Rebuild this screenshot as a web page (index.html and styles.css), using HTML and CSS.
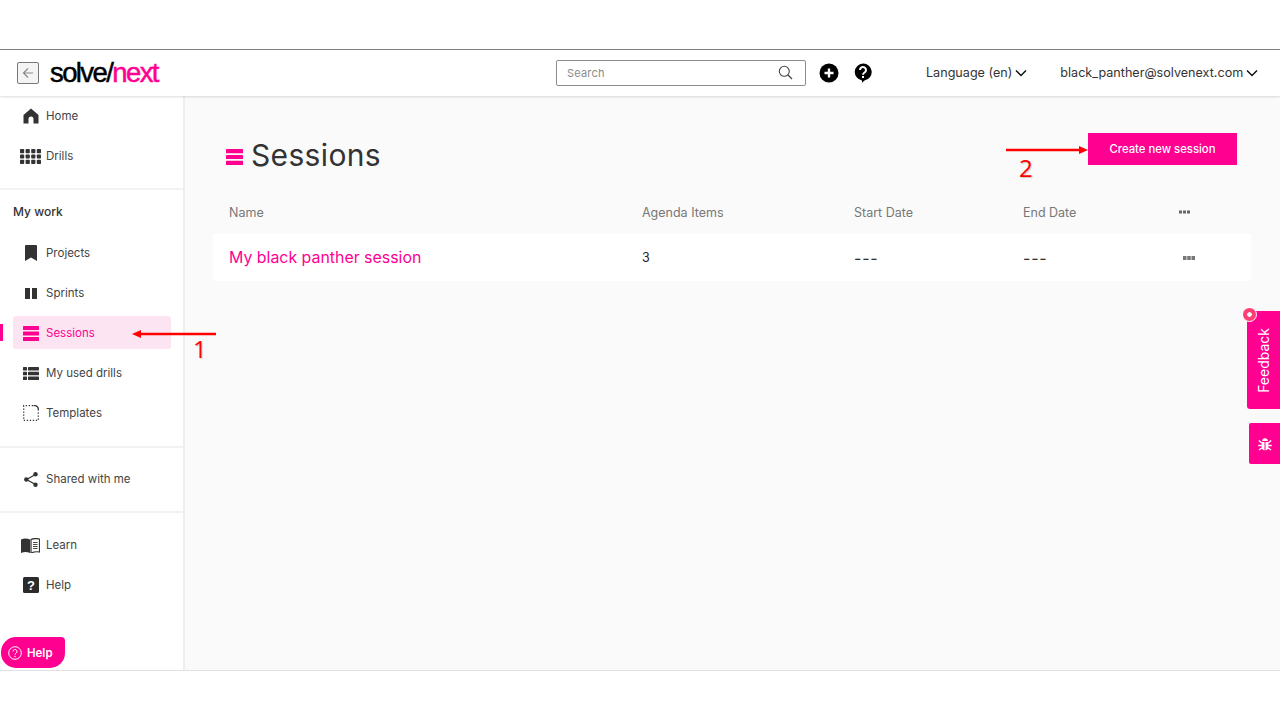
FILE: index.html
```html
<!DOCTYPE html>
<html lang="en">
<head>
<meta charset="utf-8">
<title>Sessions</title>
<link rel="stylesheet" href="styles.css">
</head>
<body>
<div class="app">
  <header class="topbar">
    <div class="brand">
      <button class="back" aria-label="Back">
        <svg width="14" height="14" viewBox="0 0 14 14"><path d="M12 7H2.500M7 2.500 2.500 7 7 11.500" fill="none" stroke="#8a8a8a" stroke-width="1.200"/></svg>
      </button>
      <span class="logo">solve/<span class="logo-next">next</span></span>
    </div>
    <div class="search">
      <span class="search-text">Search</span>
      <svg width="15" height="15" viewBox="0 0 15 15"><circle cx="6.300" cy="6.300" r="5" fill="none" stroke="#444" stroke-width="1.100"/><path d="M10 10l4 4" stroke="#444" stroke-width="1.200"/></svg>
    </div>
    <svg class="tool-plus" width="20" height="20" viewBox="0 0 20 20"><circle cx="10" cy="10" r="9.500" fill="#000"/><path d="M10 5.500v9M5.500 10h9" stroke="#fff" stroke-width="2.400"/></svg>
    <svg class="tool-help" width="18" height="20" viewBox="0 0 18 20"><path d="M9 .5a8.500 8.500 0 0 1 1.500 16.900L8 19.800v-2.400A8.500 8.500 0 0 1 9 .5Z" fill="#000"/><path d="M6 7a3 3 0 1 1 4.600 2.500C9.600 10.200 9 10.600 9 11.800" fill="none" stroke="#fff" stroke-width="2"/><rect x="8" y="13" width="2" height="2" fill="#fff"/></svg>
    <span class="menu menu-lang">Language (en)<svg width="12" height="8" viewBox="0 0 12 8"><path d="M1 1.500 6 6.500 11 1.500" fill="none" stroke="#111" stroke-width="1.500"/></svg></span>
    <span class="menu menu-user">black_panther@solvenext.com<svg width="12" height="8" viewBox="0 0 12 8"><path d="M1 1.500 6 6.500 11 1.500" fill="none" stroke="#111" stroke-width="1.500"/></svg></span>
  </header>
  <div class="body">
    <aside class="sidebar">
      <nav class="group group-first">
        <a class="item"><span class="ico"><svg width="16" height="16" viewBox="0 0 16 16"><path d="M8 .5 15.500 7v8.500H10.500V11a2.500 2.500 0 0 0-5 0v4.500H.5V7Z" fill="#333"/></svg></span>Home</a>
        <a class="item"><span class="ico"><svg width="21" height="15" viewBox="0 0 21 15"><g fill="#333"><rect x="0" y="0" width="4.200" height="4.200" rx=".8"/><rect x="5.600" y="0" width="4.200" height="4.200" rx=".8"/><rect x="11.200" y="0" width="4.200" height="4.200" rx=".8"/><rect x="16.800" y="0" width="4.200" height="4.200" rx=".8"/><rect x="0" y="5.400" width="4.200" height="4.200" rx=".8"/><rect x="5.600" y="5.400" width="4.200" height="4.200" rx=".8"/><rect x="11.200" y="5.400" width="4.200" height="4.200" rx=".8"/><rect x="16.800" y="5.400" width="4.200" height="4.200" rx=".8"/><rect x="0" y="10.800" width="4.200" height="4.200" rx=".8"/><rect x="5.600" y="10.800" width="4.200" height="4.200" rx=".8"/><rect x="11.200" y="10.800" width="4.200" height="4.200" rx=".8"/><rect x="16.800" y="10.800" width="4.200" height="4.200" rx=".8"/></g></svg></span>Drills</a>
      </nav>
      <nav class="group group-work">
        <div class="group-title">My work</div>
        <a class="item"><span class="ico"><svg width="12" height="16" viewBox="0 0 12 16"><path d="M0 1a1 1 0 0 1 1-1h10a1 1 0 0 1 1 1v15l-6-3.500L0 16Z" fill="#333"/></svg></span>Projects</a>
        <a class="item"><span class="ico"><svg width="12" height="11" viewBox="0 0 12 11"><rect width="5" height="11" fill="#333"/><rect x="7" width="5" height="11" fill="#333"/></svg></span>Sprints</a>
        <a class="item item-active"><span class="ico"><svg width="16" height="15" viewBox="0 0 16 15"><g fill="#ff0090"><rect width="16" height="4" rx=".6"/><rect y="5.500" width="16" height="4" rx=".6"/><rect y="11" width="16" height="4" rx=".6"/></g></svg></span>Sessions</a>
        <a class="item"><span class="ico"><svg width="16" height="13" viewBox="0 0 16 13"><g fill="#333"><rect width="4" height="3.600" rx=".6"/><rect x="5" width="11" height="3.600" rx=".6"/><rect y="4.700" width="4" height="3.600" rx=".6"/><rect x="5" y="4.700" width="11" height="3.600" rx=".6"/><rect y="9.400" width="4" height="3.600" rx=".6"/><rect x="5" y="9.400" width="11" height="3.600" rx=".6"/></g></svg></span>My used drills</a>
        <a class="item"><span class="ico"><svg width="16" height="16" viewBox="0 0 16 16"><path d="M10 .7H.7V15.300H15.300V6" fill="none" stroke="#333" stroke-width="1.300" stroke-dasharray="1.300 1.700"/><path d="M10.500 .7H12A3.300 3.300 0 0 1 15.300 4V5.500" fill="none" stroke="#333" stroke-width="1.300"/></svg></span>Templates</a>
      </nav>
      <nav class="group group-shared">
        <a class="item"><span class="ico"><svg width="14" height="15" viewBox="0 0 14 15"><path d="M11.500 2.500 2.500 7.500 11.500 12.500" fill="none" stroke="#333" stroke-width="1.200"/><circle cx="11.500" cy="2.300" r="2.200" fill="#333"/><circle cx="2.300" cy="7.500" r="2.200" fill="#333"/><circle cx="11.500" cy="12.700" r="2.200" fill="#333"/></svg></span>Shared with me</a>
      </nav>
      <nav class="group group-last">
        <a class="item"><span class="ico"><svg width="19" height="15" viewBox="0 0 19 15"><path d="M0 1.500C3 .3 6 .3 9 1.500V15C6 13.800 3 13.800 0 15Z" fill="#333"/><path d="M10 1.500C12.700.3 15.500.3 18.500 1V14C15.500 13.500 12.700 13.800 10 15Z" fill="none" stroke="#333" stroke-width="1.200"/><path d="M12 4.500h4.500M12 6.500h4.500M12 8.500h4.500M12 10.500h4.500" stroke="#333" stroke-width=".9"/></svg></span>Learn</a>
        <a class="item"><span class="ico"><svg width="16" height="16" viewBox="0 0 16 16"><rect width="16" height="16" rx="1.500" fill="#2b2b2b"/><text class="qmark" x="8" y="12.800" text-anchor="middle">?</text></svg></span>Help</a>
      </nav>
    </aside>
    <main class="main">
      <div class="title-row">
        <h1 class="title"><svg width="17" height="16" viewBox="0 0 17 16"><g fill="#ff0090"><rect width="17" height="4.200" rx=".5"/><rect y="5.900" width="17" height="4.200" rx=".5"/><rect y="11.800" width="17" height="4.200" rx=".5"/></g></svg>Sessions</h1>
        <button class="create">Create new session</button>
      </div>
      <div class="row row-head">
        <span>Name</span><span>Agenda Items</span><span>Start Date</span><span>End Date</span>
        <svg class="dots" width="11" height="4" viewBox="0 0 11 4"><g fill="#666"><rect width="3" height="3" y=".5"/><rect x="4" width="3" height="3" y=".5"/><rect x="8" width="3" height="3" y=".5"/></g></svg>
      </div>
      <div class="row row-body">
        <span class="session-name">My black panther session</span><span>3</span><span class="dash">---</span><span class="dash">---</span>
        <svg class="dots dots-body" width="12" height="4" viewBox="0 0 12 4"><g fill="#777"><rect width="3.500" height="4"/><rect x="4.250" width="3.500" height="4"/><rect x="8.500" width="3.500" height="4"/></g></svg>
      </div>
    </main>
  </div>
</div>

<span class="indicator"></span>
<button class="help-fab"><svg width="14" height="14" viewBox="0 0 14 14"><circle cx="7" cy="7" r="6.300" fill="none" stroke="#fff" stroke-width="1"/><path d="M5 5.500a2 2 0 1 1 3 1.700c-.7.400-1 .7-1 1.500" fill="none" stroke="#fff" stroke-width="1"/><circle cx="7" cy="10.500" r=".7" fill="#fff"/></svg>Help</button>
<div class="feedback"><span class="feedback-text">Feedback</span></div>
<span class="feedback-dot"></span>
<div class="bug"><svg width="14" height="14" viewBox="0 0 14 14"><path d="M4.200 4a2.800 2.800 0 0 1 5.600 0Z" fill="#fff"/><path d="M3.500 5H6.500V13.500C4.800 13.200 3.500 11.800 3.500 10ZM10.500 5H7.500V13.500C9.200 13.200 10.500 11.800 10.500 10Z" fill="#fff"/><path d="M.8 3.500 3.500 5.800M13.200 3.500 10.500 5.800M.3 8.500H3.500M13.700 8.500H10.500M1 13 3.800 11M13 13 10.200 11" stroke="#fff" stroke-width="1.500"/></svg></div>

<svg class="arrow arrow-one" width="84" height="10" viewBox="0 0 84 10"><path d="M84 5H8" stroke="#f00" stroke-width="2.400"/><path d="M0 5 9 1V9Z" fill="#f00"/></svg>
<span class="marker marker-one">1</span>
<svg class="arrow arrow-two" width="82" height="10" viewBox="0 0 82 10"><path d="M0 5H74" stroke="#f00" stroke-width="2.400"/><path d="M82 5 73 1V9Z" fill="#f00"/></svg>
<span class="marker marker-two">2</span>
</body>
</html>
```
FILE: styles.css
```css
* { box-sizing: border-box; }
html, body { margin: 0; height: 720px; overflow: hidden; background: #fff; }
body { font-family: Inter, "Liberation Sans", sans-serif; color: #333; }

.app {
  margin-top: 49px;
  height: 622px;
  display: flex;
  flex-direction: column;
  border-top: 1px solid #808080;
  border-bottom: 1px solid #e2dfe0;
}

.topbar {
  height: 46px;
  flex: none;
  display: flex;
  align-items: center;
  background: #fff;
  position: relative;
  z-index: 2;
  box-shadow: 0 1px 2px rgba(0,0,0,.14);
}
.brand { width: 556px; flex: none; display: flex; align-items: center; padding-left: 17px; gap: 11px; }
.back {
  width: 22px; height: 22px; padding: 0;
  display: flex; align-items: center; justify-content: center;
  background: #f4f4f4; border: 1px solid #777; border-radius: 2px;
}
.logo {
  font-family: "Liberation Sans", sans-serif;
  font-size: 27.5px;
  letter-spacing: -1.6px;
  color: #000;
  -webkit-text-stroke: .5px currentColor;
  line-height: 30px;
}
.logo-next { color: #ff0090; }
.search {
  width: 250px; height: 26px; flex: none;
  display: flex; align-items: center; justify-content: space-between;
  padding: 0 12px 0 10px; margin-top: -1px;
  border: 1px solid #8c8c8c; border-radius: 2px;
}
.search-text { font-size: 11px; color: #8a8a8a; letter-spacing: .2px; }
.tool-plus { flex: none; margin-left: 13px; }
.tool-help { flex: none; margin-left: 15px; }
.menu { display: flex; align-items: center; gap: 3px; font-size: 12.6px; color: #333; white-space: nowrap; margin-top: -1px; }
.menu-lang { margin-left: 54px; }
.menu-user { margin-left: 33px; }

.body { flex: 1; display: flex; min-height: 0; }

.sidebar {
  width: 185px; flex: none;
  background: #fff;
  border-right: 2px solid #eeeeee;
}
.group { border-bottom: 2px solid #f2f2f2; }
.group-first { padding-bottom: 12px; }
.group-work { padding-bottom: 13px; }
.group-shared { padding-top: 11px; padding-bottom: 12px; }
.group-last { padding-top: 12px; border-bottom: 0; }
.group-title { height: 43px; display: flex; align-items: center; padding-left: 13px; padding-bottom: 1px; font-size: 12px; font-weight: 500; color: #333; }
.item {
  height: 40px;
  display: flex; align-items: center;
  font-size: 11.5px; color: #444;
  padding-left: 46px;
  position: relative;
}
.ico { position: absolute; left: 20px; width: 21px; display: flex; justify-content: center; align-items: center; top: 0; bottom: 0; }
.item-active { color: #ff0090; isolation: isolate; }
.item-active::before {
  content: "";
  position: absolute; left: 13px; top: 3px;
  width: 158px; height: 33px;
  background: #fde4f3; border-radius: 3px;
  z-index: -1;
}
.qmark { font-family: "Liberation Sans", sans-serif; font-size: 13px; font-weight: 700; fill: #fff; }

.main { flex: 1; min-width: 0; background: #fafafa; padding: 37px 29px 0 28px; }
.title-row { display: flex; align-items: center; justify-content: space-between; height: 32px; padding: 0 14px 0 13px; }
.title { margin: 12px 0 0; display: flex; align-items: center; gap: 8px; font-size: 30px; font-weight: 400; color: #333; letter-spacing: .35px; }
.title svg { margin-top: 4px; }
.create {
  width: 149px; height: 32px; padding: 0;
  border: 0; background: #ff0090; color: #fff;
  font-family: inherit; font-size: 11.3px; font-weight: 500;
}
.row {
  display: grid;
  grid-template-columns: 413px 212px 169px 156px 1fr;
  align-items: center;
  padding-left: 16px;
}
.row-head { height: 30px; margin-top: 32px; font-size: 12.5px; color: #777; }
.row-body { height: 47px; margin-top: 7px; background: #fff; font-size: 12.5px; color: #222; }
.session-name { color: #ff0090; font-size: 15.9px; }
.dash { font-size: 16px; color: #333; letter-spacing: .8px; }
.dots-body { margin-left: 4px; }

.indicator { position: absolute; left: 0; top: 324px; width: 3px; height: 17px; background: #ff0090; }
.help-fab {
  position: absolute; left: 1px; top: 637px;
  width: 64px; height: 31px; padding: 0 0 0 7px;
  display: flex; align-items: center; gap: 5px;
  border: 0; background: #ff0090; color: #fff;
  border-radius: 15px 4px 15px 15px;
  font-family: inherit; font-size: 11.5px; font-weight: 600;
}
.feedback {
  position: absolute; left: 1247px; top: 311px;
  width: 33px; height: 98px;
  display: flex; align-items: center; justify-content: center;
  background: #ff0090; border-radius: 3px 0 0 3px;
}
.feedback-text { writing-mode: vertical-rl; transform: rotate(180deg); color: #fff; font-size: 14px; }
.feedback-dot {
  position: absolute; left: 1242px; top: 307px;
  width: 15px; height: 15px;
  border-radius: 50%;
  background: radial-gradient(circle, #fff 0 2px, #ff3f74 2.5px);
  border: 1px solid #fff;
}
.bug {
  position: absolute; left: 1249px; top: 423px;
  width: 31px; height: 41px;
  display: flex; align-items: center; justify-content: center;
  background: #ff0090; border-radius: 2px 0 0 2px;
}
.arrow { position: absolute; }
.arrow-one { left: 132px; top: 329px; }
.arrow-two { left: 1006px; top: 145px; }
.marker { position: absolute; font-family: "Open Sans", sans-serif; font-size: 24px; font-weight: 500; line-height: 28px; color: #f00; text-shadow: 1px 1px 1px rgba(0,0,0,.2); }
.marker-one { left: 193px; top: 335px; }
.marker-two { left: 1019px; top: 154px; }
```
